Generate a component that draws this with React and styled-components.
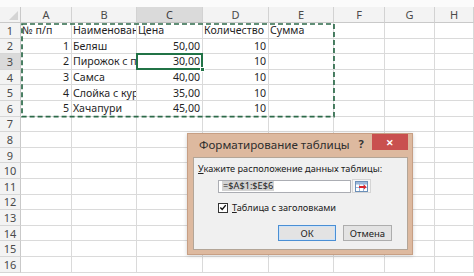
import React from 'react';
import styled, { createGlobalStyle } from 'styled-components';

// --- размеры листа ---
const COL_W = [51, 65, 66, 66, 65, 51, 50];
const HEAD_W = 21;
const STRIP_H = 7;
const HEAD_H = 16;
const ROW_H = 15.6;
const ROW_COUNT = 16;
const COLS = ['A', 'B', 'C', 'D', 'E', 'F', 'G', 'H'];

const colLeft = (i) => HEAD_W + COL_W.slice(0, i).reduce((a, b) => a + b, 0);
const rowTop = (i) => STRIP_H + HEAD_H + i * ROW_H;

// видимая часть текста (соседняя ячейка не пустая, текст обрезан)
const DATA = [
  [{ t: '№ п/п' }, { t: 'Наименован' }, { t: 'Цена' }, { t: 'Количество' }, { t: 'Сумма' }],
  [{ t: '1', r: true }, { t: 'Беляш' }, { t: '50,00', r: true }, { t: '10', r: true }],
  [{ t: '2', r: true }, { t: 'Пирожок с п' }, { t: '30,00', r: true }, { t: '10', r: true }],
  [{ t: '3', r: true }, { t: 'Самса' }, { t: '40,00', r: true }, { t: '10', r: true }],
  [{ t: '4', r: true }, { t: 'Слойка с кур' }, { t: '35,00', r: true }, { t: '10', r: true }],
  [{ t: '5', r: true }, { t: 'Хачапури' }, { t: '45,00', r: true }, { t: '10', r: true }],
];

const GlobalStyle = createGlobalStyle`
  html, body {
    margin: 0;
    padding: 0;
    width: 474px;
    height: 276px;
    overflow: hidden;
    background: #ffffff;
    font-family: 'Noto Sans', 'Liberation Sans', sans-serif;
  }
  * { box-sizing: border-box; }
`;

export default function App() {
  const antsW = colLeft(5) - colLeft(0) + 1;
  const antsH = ROW_H * 6 + 1;

  return (
    <>
      <GlobalStyle />
      <Page>
        <TopStrip />
        <Sheet>
          <Corner />
          {COLS.map((c) => (
            <ColHead key={c} $active={c === 'C'}>{c}</ColHead>
          ))}
          {Array.from({ length: ROW_COUNT }).map((_, ri) => (
            <React.Fragment key={ri}>
              <RowHead $active={ri === 2}>{ri + 1}</RowHead>
              {COLS.map((c, ci) => {
                const cell = DATA[ri] && DATA[ri][ci];
                return (
                  <Cell key={c} $right={cell && cell.r}>
                    {cell ? cell.t : ''}
                  </Cell>
                );
              })}
            </React.Fragment>
          ))}
        </Sheet>

        <Ants
          style={{ left: colLeft(0), top: rowTop(0), width: antsW, height: antsH }}
          viewBox={`0 0 ${antsW} ${antsH}`}
        >
          <rect
            x="1"
            y="1"
            width={antsW - 2}
            height={antsH - 2}
            fill="none"
            stroke="#2c6a49"
            strokeWidth="1.7"
            strokeDasharray="5 3"
          />
        </Ants>

        <ActiveCell
          style={{ left: colLeft(2) - 1, top: rowTop(2) - 1, width: COL_W[2] + 1, height: ROW_H + 1 }}
        >
          <FillHandle />
        </ActiveCell>

        <Dialog>
          <TitleBar>
            <Title>Форматирование таблицы</Title>
            <Help>?</Help>
            <CloseBtn>✕</CloseBtn>
          </TitleBar>
          <Panel>
            <Prompt><u>У</u>кажите расположение данных таблицы:</Prompt>
            <RangeRow>
              <RangeInput>
                <Selected>=$A$1:$E$6</Selected>
              </RangeInput>
              <RangeBtn>
                <svg width="13" height="11" viewBox="0 0 13 11">
                  <rect x="0.5" y="0.5" width="12" height="10" fill="#ffffff" stroke="#6b8fb8" />
                  <rect x="1" y="1" width="11" height="2.5" fill="#9bb8dc" />
                  <line x1="4.5" y1="1" x2="4.5" y2="10" stroke="#9bb8dc" />
                  <line x1="8.5" y1="1" x2="8.5" y2="10" stroke="#9bb8dc" />
                  <line x1="1" y1="6.5" x2="12" y2="6.5" stroke="#9bb8dc" />
                  <path d="M4 5 L9 5 L9 3.5 L11.5 6 L9 8.5 L9 7 L4 7 Z" fill="#d8262e" />
                </svg>
              </RangeBtn>
            </RangeRow>
            <CheckRow>
              <CheckBox>
                <svg width="9" height="9" viewBox="0 0 9 9">
                  <path d="M1.5 4.6 L3.6 6.8 L7.6 1.8" fill="none" stroke="#111" strokeWidth="1.6" />
                </svg>
              </CheckBox>
              <CheckLabel><u>Т</u>аблица с заголовками</CheckLabel>
            </CheckRow>
            <Buttons>
              <Button $primary $w={58}>ОК</Button>
              <Button $w={49}>Отмена</Button>
            </Buttons>
          </Panel>
        </Dialog>
      </Page>
    </>
  );
}

// --- стили листа ---

const Page = styled.div`
  position: relative;
  width: 474px;
  height: 276px;
  overflow: hidden;
  background: #ffffff;
`;

const TopStrip = styled.div`
  height: ${STRIP_H}px;
  background: #fbfbfb;
`;

const Sheet = styled.div`
  display: grid;
  grid-template-columns: ${HEAD_W}px ${COL_W.map((w) => `${w}px`).join(' ')} 1fr;
  grid-template-rows: ${HEAD_H}px;
  grid-auto-rows: ${ROW_H}px;
  font-family: 'Noto Sans', 'Liberation Sans', sans-serif;
`;

const Corner = styled.div`
  position: relative;
  background: #f3f3f3;
  border-right: 1px solid #c9c9c9;
  border-bottom: 1px solid #c9c9c9;

  &::after {
    content: '';
    position: absolute;
    right: 2px;
    bottom: 2px;
    border-style: solid;
    border-width: 0 0 9px 9px;
    border-color: transparent transparent #d4d4d4 transparent;
  }
`;

const ColHead = styled.div`
  display: flex;
  align-items: center;
  justify-content: center;
  font-size: 11px;
  color: ${(p) => (p.$active ? '#3a3a3a' : '#4a4a4a')};
  background: ${(p) => (p.$active ? '#dadada' : '#f3f3f3')};
  border-right: 1px solid #d2d2d2;
  border-bottom: 1px solid ${(p) => (p.$active ? '#bdbdbd' : '#c9c9c9')};
`;

const RowHead = styled.div`
  display: flex;
  align-items: center;
  justify-content: center;
  font-size: 11px;
  color: #4a4a4a;
  background: ${(p) => (p.$active ? '#dadada' : '#f3f3f3')};
  border-right: 1px solid #c9c9c9;
  border-bottom: 1px solid #d6d6d6;
`;

const Cell = styled.div`
  display: flex;
  align-items: center;
  justify-content: ${(p) => (p.$right ? 'flex-end' : 'flex-start')};
  padding: 0 2px 0 1px;
  font-size: 10.6px;
  color: #1f1f1f;
  white-space: nowrap;
  overflow: hidden;
  border-right: 1px solid #dadada;
  border-bottom: 1px solid #dadada;
`;

const Ants = styled.svg`
  position: absolute;
  pointer-events: none;
`;

const ActiveCell = styled.div`
  position: absolute;
  border: 2px solid #217346;
`;

const FillHandle = styled.div`
  position: absolute;
  right: -4px;
  bottom: -4px;
  width: 5px;
  height: 5px;
  background: #217346;
  border: 1px solid #ffffff;
`;

// --- стили диалога ---

const Dialog = styled.div`
  position: absolute;
  left: 187px;
  top: 133px;
  width: 226px;
  height: 122px;
  display: flex;
  flex-direction: column;
  background: #ddb99f;
  border: 1px solid #c79f84;
  box-shadow: 0 1px 4px rgba(0, 0, 0, 0.18);
  padding: 0 4px 4px 5px;
`;

const TitleBar = styled.div`
  height: 23px;
  display: flex;
  align-items: flex-start;
`;

const Title = styled.div`
  flex: 1;
  min-width: 0;
  padding: 3px 0 0 6px;
  font-size: 11.6px;
  color: #2e2e2e;
  white-space: nowrap;
`;

const Help = styled.div`
  width: 14px;
  padding-top: 2px;
  font-size: 11px;
  font-weight: 700;
  color: #333333;
  text-align: center;
  margin-right: 4px;
`;

const CloseBtn = styled.div`
  flex: none;
  width: 36px;
  height: 16px;
  background: #c9504f;
  color: #ffffff;
  font-size: 9px;
  font-weight: 700;
  display: flex;
  align-items: center;
  justify-content: center;
`;

const Panel = styled.div`
  flex: 1;
  background: #f0f0f0;
  border: 1px solid #b3a597;
  padding: 4px 15px 0 4px;
  font-size: 9.2px;
  color: #202020;
`;

const Prompt = styled.div`
  height: 13px;
  line-height: 13px;
  white-space: nowrap;
`;

const RangeRow = styled.div`
  display: flex;
  align-items: center;
  margin: 4px 0 0 20px;
  gap: 1px;
`;

const RangeInput = styled.div`
  width: 133px;
  height: 13px;
  background: #ffffff;
  border: 1px solid #abadb3;
  display: flex;
  align-items: center;
  padding-left: 3px;
`;

const Selected = styled.span`
  background: #d3d3d3;
  color: #222222;
  line-height: 10px;
  padding: 0 1px;
`;

const RangeBtn = styled.div`
  width: 19px;
  height: 14px;
  display: flex;
  align-items: center;
  justify-content: center;
  background: #f6f6f6;
  border: 1px solid #d5d5d5;
`;

const CheckRow = styled.div`
  display: flex;
  align-items: center;
  gap: 4px;
  margin: 8px 0 0 20px;
`;

const CheckBox = styled.div`
  width: 10px;
  height: 10px;
  background: #ffffff;
  border: 1px solid #333333;
  display: flex;
  align-items: center;
  justify-content: center;
`;

const CheckLabel = styled.div`
  white-space: nowrap;
`;

const Buttons = styled.div`
  display: flex;
  justify-content: flex-end;
  gap: 7px;
  margin-top: 11px;
`;

const Button = styled.div`
  width: ${(p) => p.$w}px;
  height: 16px;
  display: flex;
  align-items: center;
  justify-content: center;
  background: #e3e3e3;
  border: 1px solid ${(p) => (p.$primary ? '#4a8fd4' : '#adadad')};
  box-shadow: ${(p) => (p.$primary ? 'inset 0 0 0 1px #cfe3f7' : 'none')};
  font-size: 9.5px;
  color: #1c1c1c;
`;
